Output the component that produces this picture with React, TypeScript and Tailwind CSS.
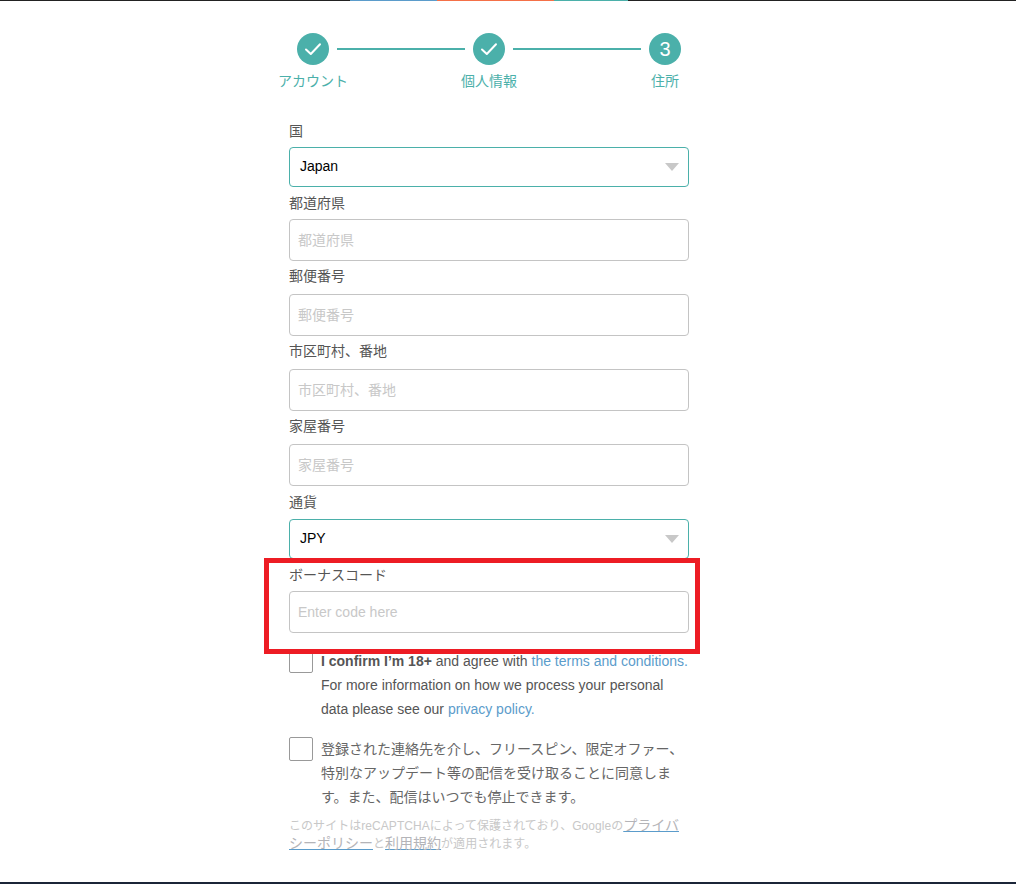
const font = { sans: "font-['Liberation_Sans','Noto_Sans_CJK_JP',sans-serif]" };

const steps = [
  { label: 'アカウント', done: true },
  { label: '個人情報', done: true },
  { label: '住所', done: false },
];

function Check() {
  return (
    <svg width="18" height="14" viewBox="0 0 18 14" fill="none" stroke="#fff" strokeWidth="2" strokeLinecap="round" strokeLinejoin="round">
      <path d="M2 7.5 L6.8 12 L16 2.2" />
    </svg>
  );
}

function Stepper() {
  return (
    <div className="flex w-[400px] ml-[289px] pt-[32px] h-[120px]">
      {steps.map((s, i) => (
        <div key={s.label} className="contents">
          <div className="w-[48px] flex flex-col items-center shrink-0">
            <div className="w-[32px] h-[32px] rounded-full bg-[#4bb0aa] flex items-center justify-center text-white text-[20px] leading-none shrink-0">
              {s.done ? <Check /> : '3'}
            </div>
            <span className="text-[14px] leading-[20px] mt-[6px] text-[#4bb0aa] whitespace-nowrap">{s.label}</span>
          </div>
          {i < steps.length - 1 && <div className="w-[128px] shrink-0 h-[2px] bg-[#4bb0aa] mt-[15px]" />}
        </div>
      ))}
    </div>
  );
}

function SelectField({ label, value, tight }: { label: string; value: string; tight?: boolean }) {
  return (
    <div>
      <label className={`block text-[14px] leading-[20px] text-[#555] ${tight ? 'h-[27px]' : 'h-[26px]'}`}>{label}</label>
      <div className="h-[40px] rounded-[4px] border border-[#4bb0aa] flex items-center justify-between pl-[10px] pr-[9px] text-[14px] text-black">
        <span className="-mt-[1px]">{value}</span>
        <span className="w-0 h-0 border-x-[7px] border-x-transparent border-t-[8px] border-t-[#c8c8c8]" />
      </div>
    </div>
  );
}

function InputField({ label, placeholder, tight }: { label: string; placeholder: string; tight?: boolean }) {
  return (
    <div>
      <label className={`block text-[14px] leading-[20px] text-[#555] ${tight ? 'h-[33px] pt-[5px]' : 'h-[32px] pt-[6px]'}`}>{label}</label>
      <div className="h-[42px] rounded-[4px] border border-[#c4c4c4] flex items-center px-[8px] text-[14px] text-[#c8c8c8]">
        {placeholder}
      </div>
    </div>
  );
}

export default function App() {
  return (
    <div className={`relative h-[884px] w-full bg-white flex flex-col ${font.sans}`}>
      <div className="h-[1px] bg-[#222] flex shrink-0 pl-[350px]">
        <div className="w-[87px] bg-[#5b9ccb]" />
        <div className="w-[117px] bg-[#f47048]" />
        <div className="w-[74px] bg-[#4bb0aa]" />
      </div>

      <div className="flex-1">
        <Stepper />
        <div className="w-[400px] ml-[289px]">
          <SelectField label="国" value="Japan" />
          <InputField label="都道府県" placeholder="都道府県" />
          <InputField tight label="郵便番号" placeholder="郵便番号" />
          <InputField tight label="市区町村、番地" placeholder="市区町村、番地" />
          <InputField tight label="家屋番号" placeholder="家屋番号" />
          <div className="mt-[6px]"><SelectField tight label="通貨" value="JPY" /></div>
          <InputField label="ボーナスコード" placeholder="Enter code here" />

          <div className="flex gap-[8px] mt-[16px]">
            <div className="w-[24px] h-[24px] rounded-[2px] border border-[#999] shrink-0" />
            <p className="text-[14px] leading-[24px] text-[#555] whitespace-nowrap">
              <b>I confirm I’m 18+</b> and agree with <span className="text-[#5b9ccb]">the terms and conditions.</span>
              <br />For more information on how we process your personal
              <br />data please see our <span className="text-[#5b9ccb]">privacy policy.</span>
            </p>
          </div>

          <div className="flex gap-[8px] mt-[16px]">
            <div className="w-[24px] h-[24px] rounded-[2px] border border-[#999] shrink-0" />
            <p className="text-[14px] leading-[24px] text-[#666]">
              登録された連絡先を介し、フリースピン、限定オファー、特別なアップデート等の配信を受け取ることに同意します。また、配信はいつでも停止できます。
            </p>
          </div>

          <p className="text-[12px] tracking-[0.05px] leading-[18px] text-[#c8c8c8] mt-[8px]">
            このサイトはreCAPTCHAによって保護されており、Googleの<span className="text-[14px] tracking-normal leading-[14px] underline text-[#b4b4b8] decoration-[#5b9ccb]">プライバシーポリシー</span>と<span className="text-[14px] tracking-normal leading-[14px] underline text-[#b4b4b8] decoration-[#5b9ccb]">利用規約</span>が適用されます。
          </p>
        </div>
      </div>

      <div className="h-[2px] bg-[#1b2538] shrink-0" />

      <div className="absolute left-[264px] top-[558px] w-[436px] h-[96px] border-[5px] border-[#ed1c24]" />
    </div>
  );
}
